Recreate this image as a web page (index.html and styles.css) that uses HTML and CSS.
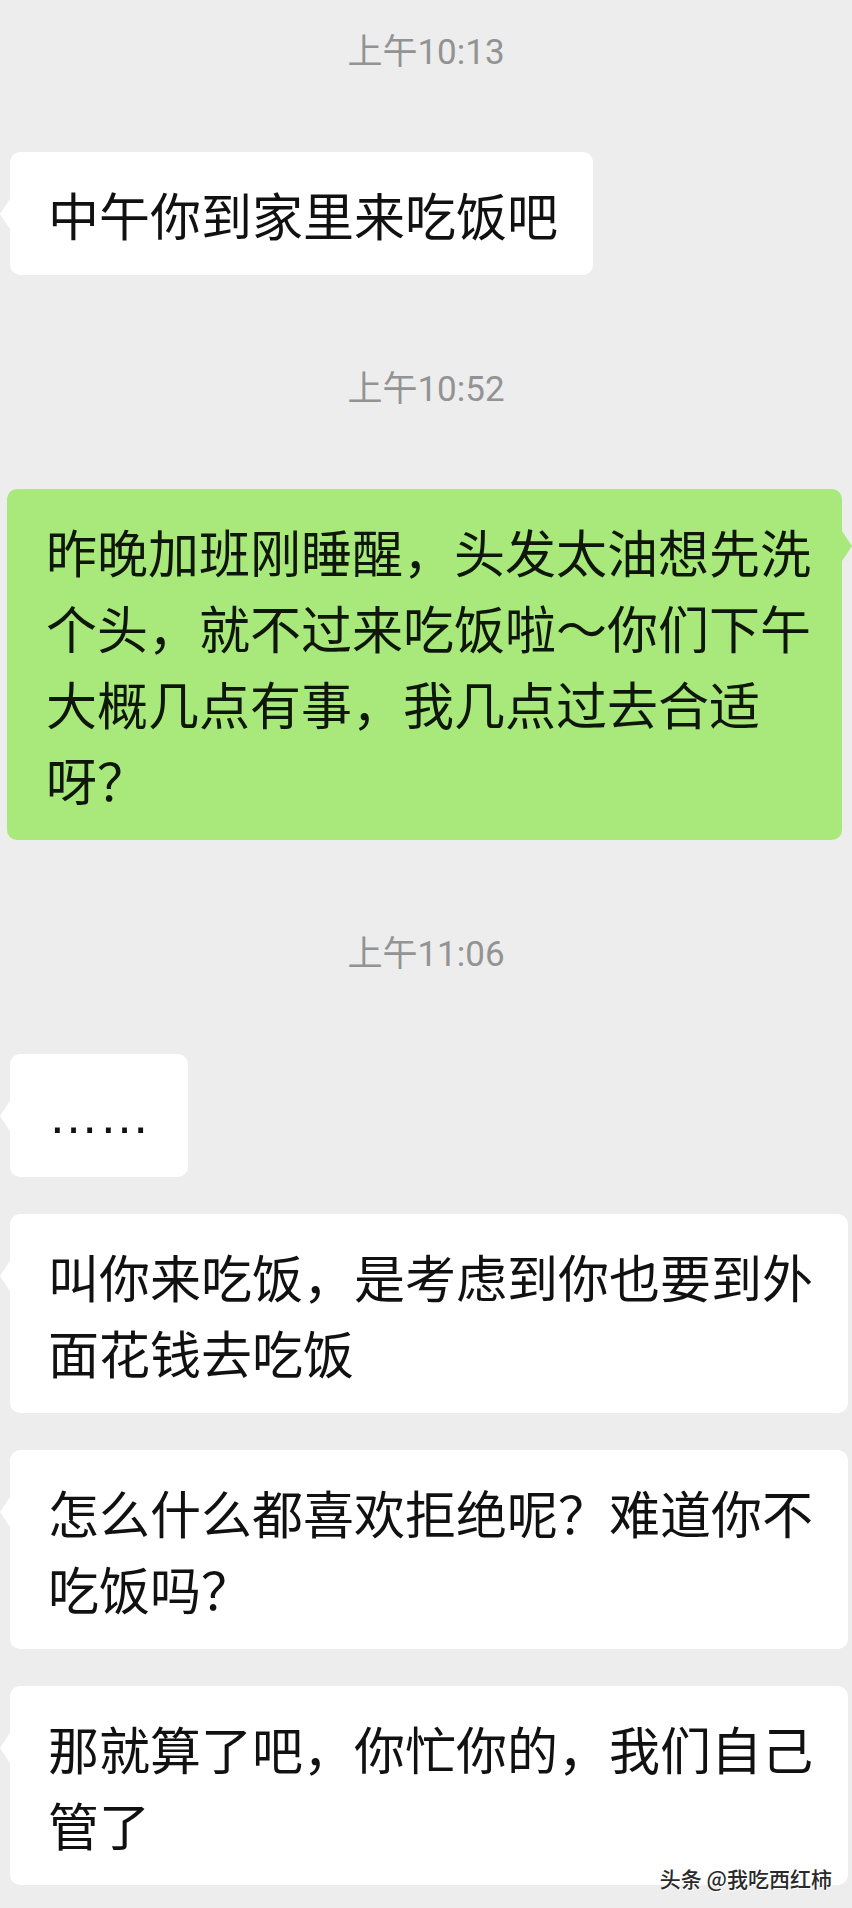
FILE: index.html
```html
<!DOCTYPE html>
<html lang="zh">
<head>
  <meta charset="UTF-8" />
  <meta name="viewport" content="width=device-width, initial-scale=1.0" />
  <title>聊天记录</title>
  <link rel="stylesheet" href="styles.css">
</head>
<body>
  <div class="chat">
    <div class="time first">上午10:13</div>
    <div class="row">
      <div class="bubble">中午你到家里来吃饭吧</div>
    </div>

    <div class="time">上午10:52</div>
    <div class="row me">
      <div class="bubble green">昨晚加班刚睡醒，头发太油想先洗个头，就不过来吃饭啦～你们下午大概几点有事，我几点过去合适呀？</div>
    </div>

    <div class="time">上午11:06</div>
    <div class="row">
      <div class="bubble dots">……</div>
    </div>
    <div class="row next">
      <div class="bubble">叫你来吃饭，是考虑到你也要到外面花钱去吃饭</div>
    </div>
    <div class="row next">
      <div class="bubble">怎么什么都喜欢拒绝呢？难道你不吃饭吗？</div>
    </div>
    <div class="row next">
      <div class="bubble">那就算了吧，你忙你的，我们自己管了</div>
    </div>

    <div class="mark">头条 @我吃西红柿</div>
  </div>
</body>
</html>
```

FILE: styles.css
```css
body {
  margin: 0;
  background: #ededed;
  font-family: "Noto Sans CJK SC", sans-serif;
}
.chat {
  position: relative;
  width: 852px;
  height: 1908px;
  box-sizing: border-box;
  padding-top: 33px;
  overflow: hidden;
}
.time {
  margin-top: 95px;
  height: 40px;
  line-height: 40px;
  text-align: center;
  font-family: Roboto, "Noto Sans CJK SC", sans-serif;
  font-size: 35px;
  color: #939393;
}
.time.first {
  margin-top: 0;
}
.row {
  display: flex;
  margin-top: 79px;
  padding: 0 4px 0 10px;
}
.row.next {
  margin-top: 37px;
}
.row.me {
  justify-content: flex-end;
  padding: 0 10px 0 7px;
}
.bubble {
  position: relative;
  box-sizing: border-box;
  max-width: 100%;
  padding: 24px 35px 23px 38px;
  background: #fff;
  border-radius: 10px;
  font-size: 51px;
  line-height: 76px;
  color: #111;
}
.bubble::before {
  content: "";
  position: absolute;
  top: 47px;
  left: -10px;
  border-top: 15px solid transparent;
  border-bottom: 15px solid transparent;
  border-right: 10px solid #fff;
}
.bubble.green {
  background: #a9e87b;
  padding: 24px 31px 23px 39px;
  color: #0e1709;
}
.bubble.green::before {
  top: 42px;
  left: auto;
  right: -10px;
  border-right: none;
  border-left: 10px solid #a9e87b;
}
.bubble.dots {
  font-family: "Liberation Sans", sans-serif;
  padding-right: 38px;
}
.mark {
  position: absolute;
  right: 20px;
  bottom: 17px;
  font-size: 21px;
  line-height: 26px;
  font-weight: 500;
  color: #2a2a2a;
  text-shadow: 1px 1px 0 #fff;
}
```
